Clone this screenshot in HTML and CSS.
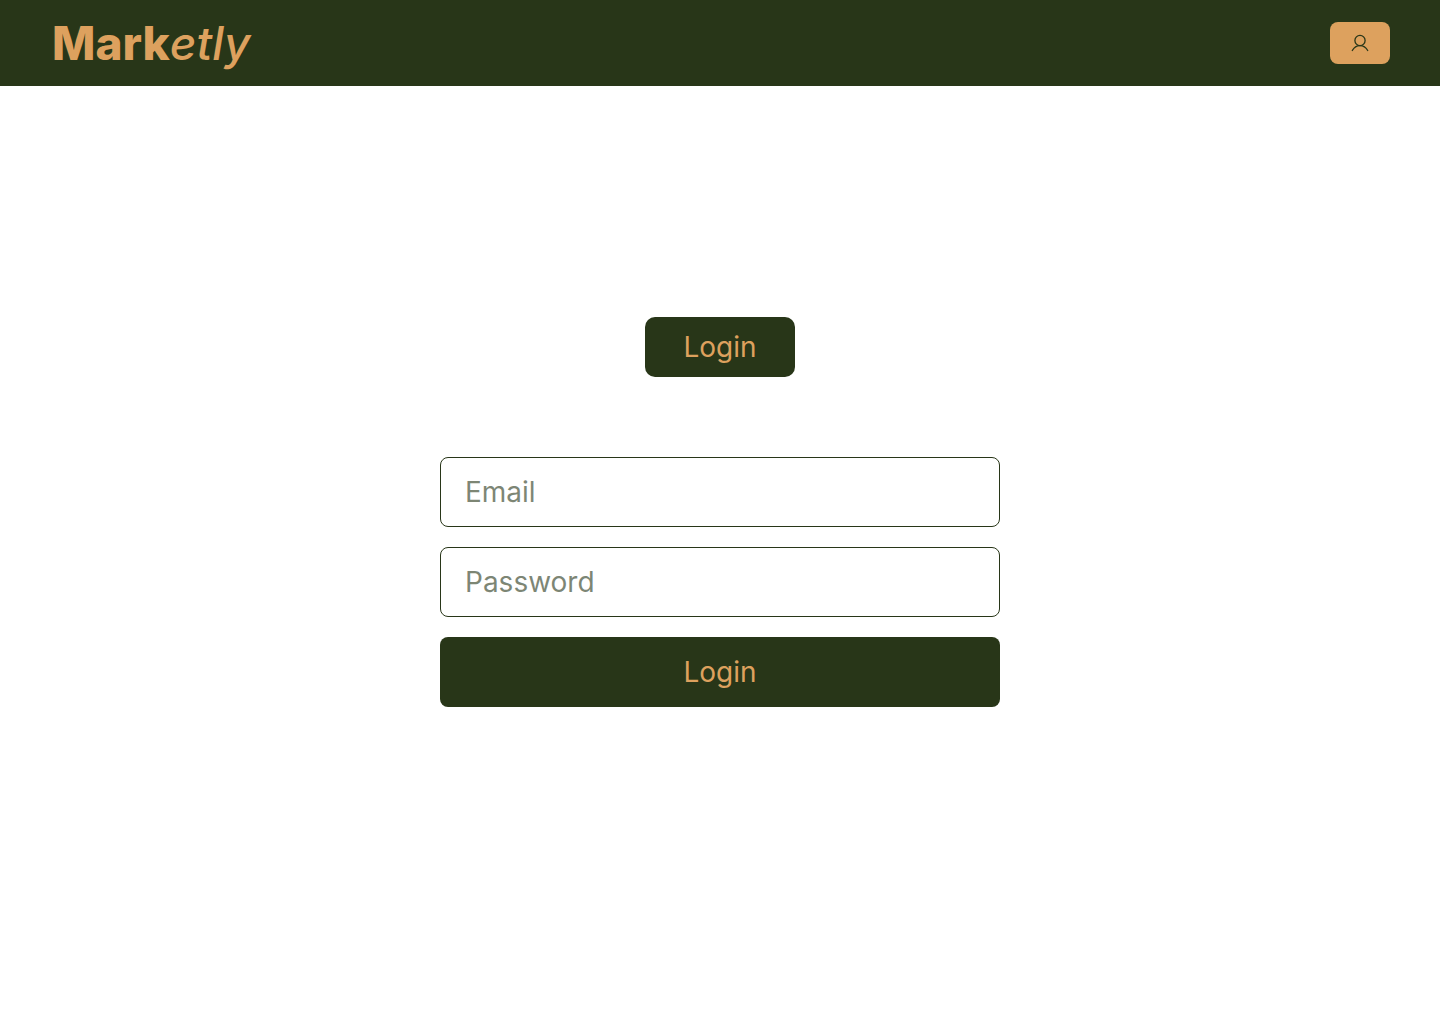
FILE: index.html
```html
<!DOCTYPE html>
<html lang="en">
<head>
  <meta charset="utf-8">
  <meta name="viewport" content="width=device-width, initial-scale=1">
  <title>Marketly</title>
  <link rel="stylesheet" href="styles.css">
</head>
<body>
  <header class="topbar">
    <a class="logo" href="#"><b class="logo-strong">Mark</b><i class="logo-light">etly</i></a>
    <button class="account" type="button" aria-label="Account">
      <svg class="account-icon" viewBox="0 0 20 20" aria-hidden="true">
        <circle cx="10" cy="7.5" r="5.1"/>
        <path d="M2.3 17.5C3.9 14.6 6.7 12.6 10 12.6s6.1 2 7.7 4.9"/>
      </svg>
    </button>
  </header>
  <main class="page">
    <button class="tab" type="button">Login</button>
    <form class="form">
      <input class="field" type="email" placeholder="Email" aria-label="Email">
      <input class="field" type="password" placeholder="Password" aria-label="Password">
      <button class="submit" type="submit">Login</button>
    </form>
  </main>
</body>
</html>
```

FILE: styles.css
```css
:root {
  --green: #283618;
  --sand: #dda15e;
  --bar: 86px;
}

* {
  box-sizing: border-box;
}

body {
  display: flex;
  flex-direction: column;
  min-height: 100vh;
  margin: 0;
  background: #fff;
  color: var(--green);
  font-family: Inter, sans-serif;
}

button,
input {
  margin: 0;
  font: inherit;
}

button {
  border: 0;
  cursor: pointer;
}

.topbar {
  display: flex;
  align-items: center;
  justify-content: space-between;
  height: var(--bar);
  padding: 0 50px 0 52px;
  background: var(--green);
}

.logo {
  color: var(--sand);
  font-size: 46px;
  line-height: 56px;
  text-decoration: none;
}

.logo-strong {
  font-weight: 800;
}

.logo-light {
  font-weight: 500;
}

.account {
  display: flex;
  align-items: center;
  justify-content: center;
  width: 60px;
  height: 42px;
  padding: 0;
  border-radius: 8px;
  background: var(--sand);
}

.account-icon {
  width: 20px;
  height: 20px;
  fill: none;
  stroke: var(--green);
  stroke-width: 1.3;
  stroke-linecap: round;
}

.page {
  display: flex;
  flex: 1;
  flex-direction: column;
  align-items: center;
  justify-content: center;
  gap: 80px;
  padding: 0 20px var(--bar);
}

.tab,
.submit {
  padding: 0;
  background: var(--green);
  color: var(--sand);
  font-size: 28px;
  line-height: 34px;
}

.tab {
  width: 150px;
  height: 60px;
  border-radius: 10px;
}

.form {
  display: flex;
  flex-direction: column;
  gap: 20px;
  width: 100%;
  max-width: 560px;
}

.field {
  width: 100%;
  height: 70px;
  padding: 0 24px;
  border: 1px solid var(--green);
  border-radius: 8px;
  background: #fff;
  color: var(--green);
  font-size: 28px;
}

.field::placeholder {
  color: var(--green);
  opacity: 0.6;
}

.submit {
  height: 70px;
  border-radius: 8px;
}
```
